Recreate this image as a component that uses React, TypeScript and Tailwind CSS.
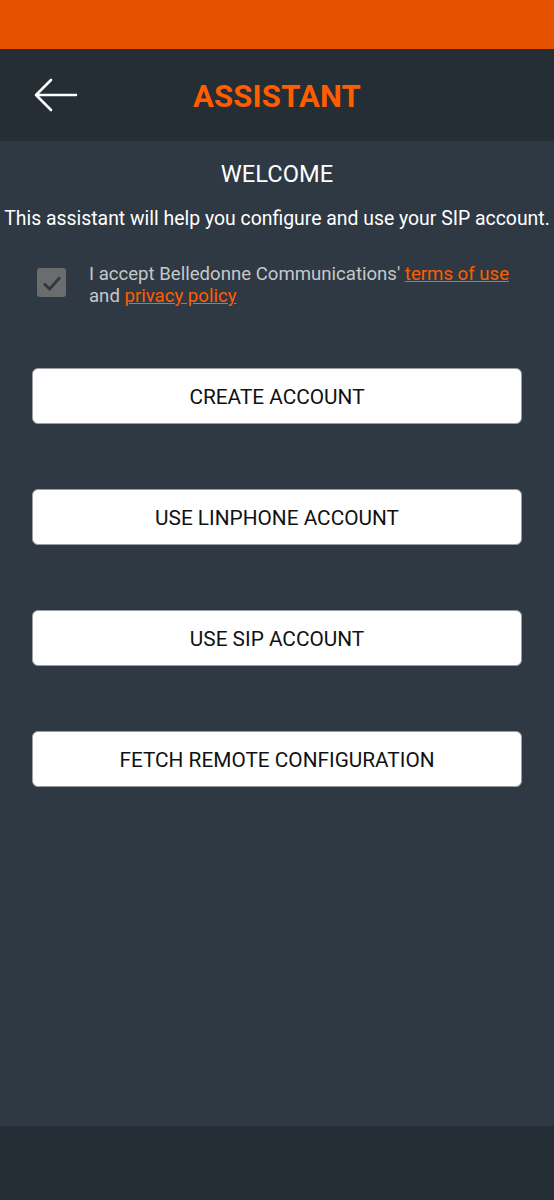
import React from 'react';

const buttons = ['CREATE ACCOUNT', 'USE LINPHONE ACCOUNT', 'USE SIP ACCOUNT', 'FETCH REMOTE CONFIGURATION'];

export default function App() {
  return (
    <div className="flex h-[1200px] w-full flex-col bg-[#2f3943] font-['Roboto',sans-serif]">
      {/* status bar */}
      <div className="h-[49px] shrink-0 bg-[#e65100]" />

      {/* toolbar */}
      <div className="relative flex h-[92px] shrink-0 items-center justify-center bg-[#252d35]">
        <button className="absolute left-[30px] top-[26px] flex h-[40px] w-[50px] items-center justify-center">
          <svg width="46" height="38" viewBox="0 0 46 38" fill="none">
            <path d="M44 19H4M19 4L4 19L19 34" stroke="white" strokeWidth="2.6" strokeLinecap="round" strokeLinejoin="round" />
          </svg>
        </button>
        <h1 className="mt-[3px] text-[31px] font-bold leading-none tracking-[0.2px] text-[#ff5e00]">ASSISTANT</h1>
      </div>

      {/* content */}
      <div className="flex flex-1 flex-col items-center">
        <h2 className="mt-[20px] text-[23.7px] leading-[26px] text-white">WELCOME</h2>
        <p className="mt-[20px] whitespace-nowrap text-[19.4px] leading-[24px] text-white">
          This assistant will help you configure and use your SIP account.
        </p>

        <div className="mt-[32px] flex w-full items-start pl-[37px] pr-[10px]">
          <div className="mt-[5px] flex h-[29px] w-[29px] shrink-0 items-center justify-center rounded-[3px] bg-[#6a6c6e]">
            <svg width="20" height="16" viewBox="0 0 20 16" fill="none">
              <path d="M2 8.5L7.5 14L18 2.5" stroke="#2f3943" strokeWidth="2.8" />
            </svg>
          </div>
          <p className="ml-[23px] whitespace-nowrap text-[18.6px] leading-[22px] text-[#c5c8cb]">
            I accept Belledonne Communications'{' '}
            <a className="text-[#ff5e00] underline">terms of use</a>
            <br />
            and <a className="text-[#ff5e00] underline">privacy policy</a>
          </p>
        </div>

        <div className="mt-[61px] flex w-full flex-col gap-[65px] px-[32px]">
          {buttons.map((b) => (
            <button
              key={b}
              className="flex h-[56px] w-full items-center justify-center rounded-[6px] border border-[#9a9ea2] bg-white pt-[3px] text-[20.8px] text-[#111111]"
            >
              {b}
            </button>
          ))}
        </div>
      </div>

      {/* bottom bar */}
      <div className="h-[74px] shrink-0 bg-[#252d35]" />
    </div>
  );
}
